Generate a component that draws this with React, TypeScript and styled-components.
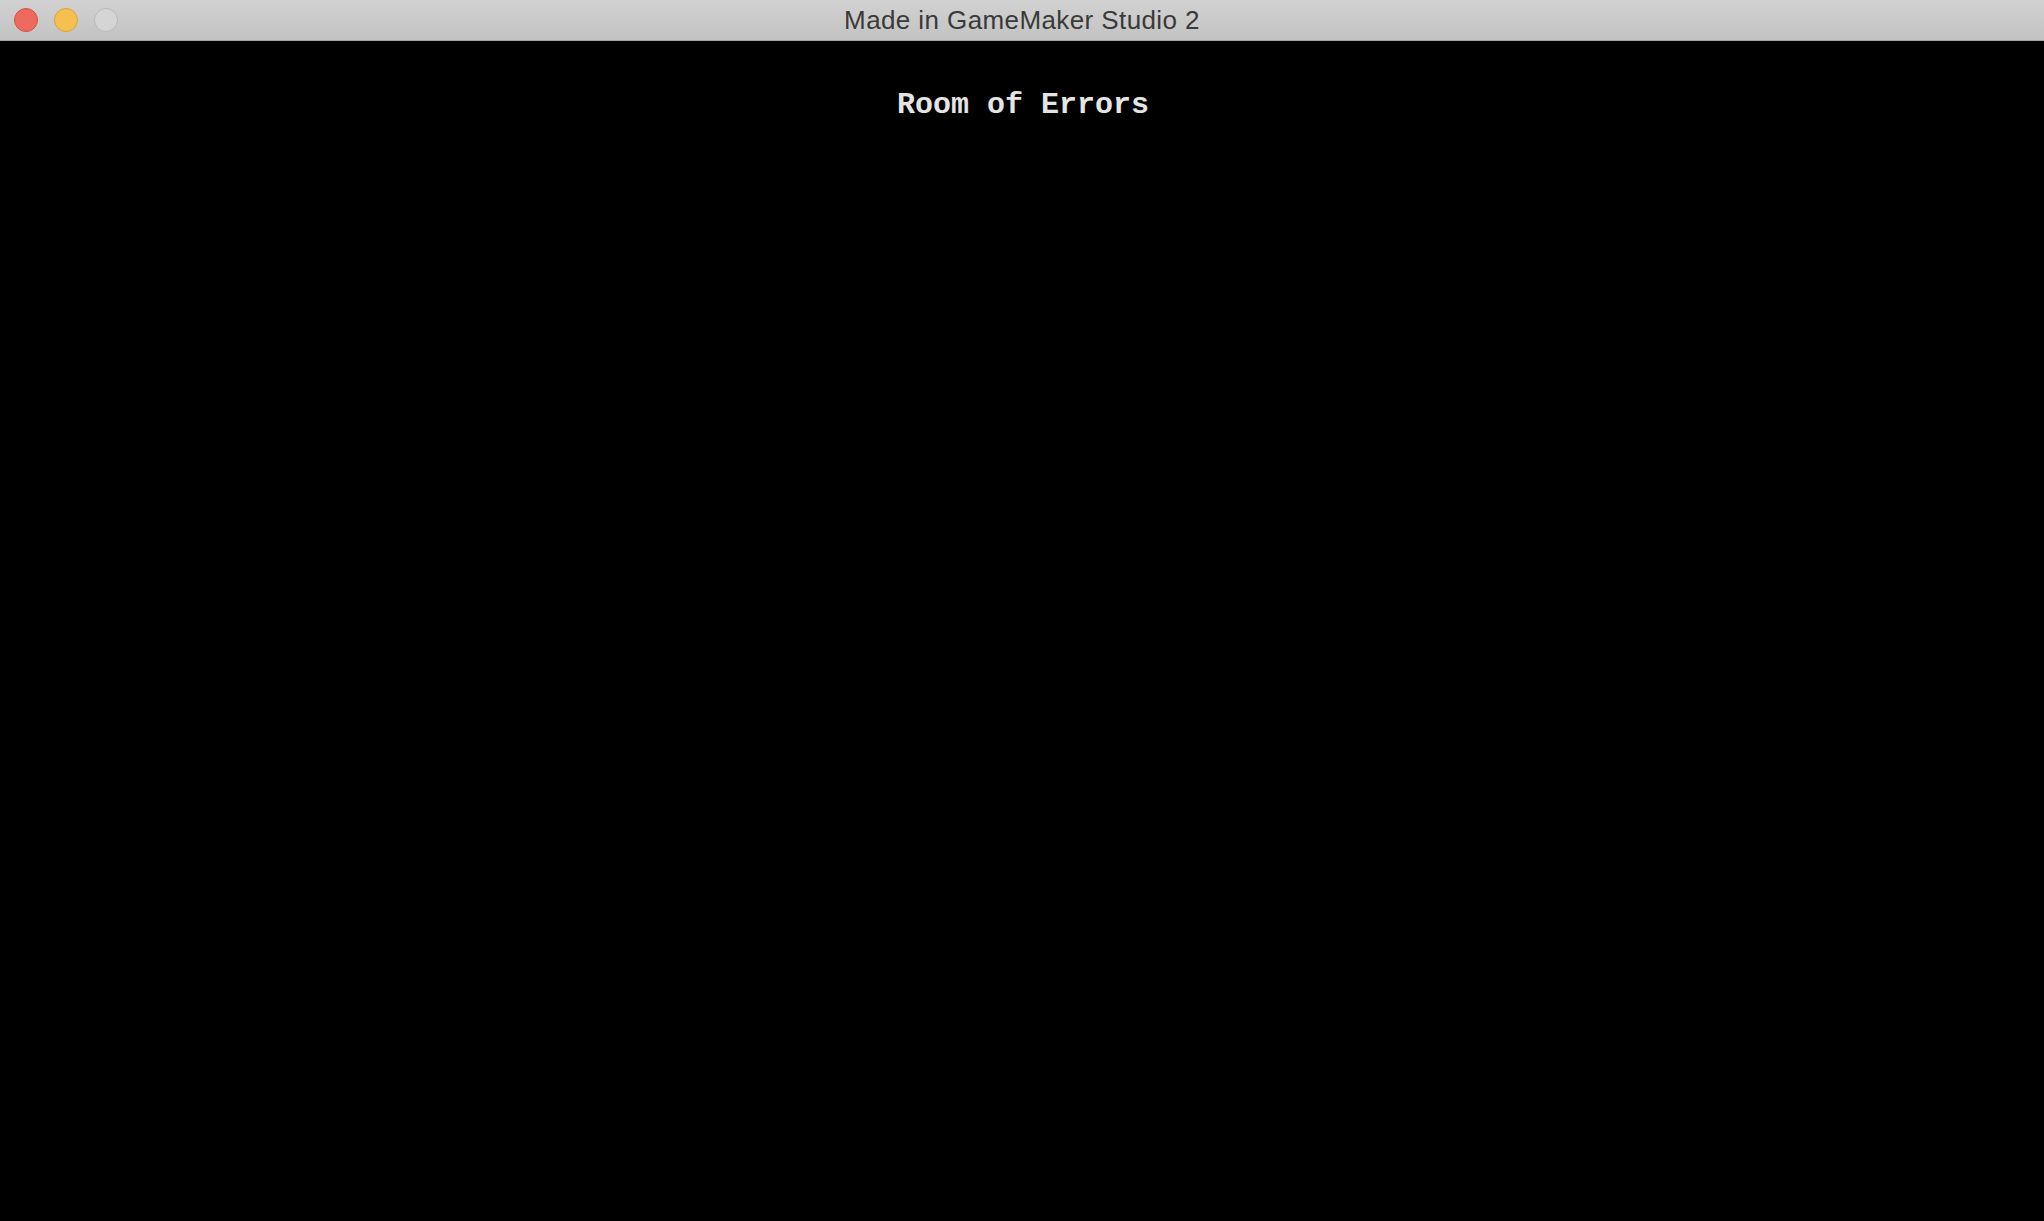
import React from "react";
import styled, { createGlobalStyle } from "styled-components";

const Global = createGlobalStyle`
  html, body { margin: 0; padding: 0; background: #000; }
  body { width: 2044px; height: 1221px; overflow: hidden; }
`;

const Window = styled.div`
  width: 2044px;
  height: 1221px;
  display: flex;
  flex-direction: column;
  background: #000;
`;

const TitleBar = styled.div`
  position: relative;
  height: 41px;
  flex: 0 0 41px;
  box-sizing: border-box;
  padding-top: 1px;
  background: linear-gradient(#d2d2d2, #c2c2c2);
  border-bottom: 1px solid #a4a4a4;
  display: flex;
  align-items: center;
  justify-content: center;
`;

const Lights = styled.div`
  position: absolute;
  left: 14px;
  top: 8px;
  display: flex;
  gap: 16px;
`;

const Light = styled.span<{ $bg: string; $border: string }>`
  width: 22px;
  height: 22px;
  border-radius: 50%;
  background: ${(p) => p.$bg};
  border: 1px solid ${(p) => p.$border};
`;

const Title = styled.div`
  font-family: "Liberation Sans", Arial, sans-serif;
  font-size: 26px;
  color: #3a3a3a;
  letter-spacing: 0.4px;
`;

const Game = styled.div`
  flex: 1;
  background: #000;
  display: flex;
  justify-content: center;
  padding-top: 46px;
`;

const RoomTitle = styled.div`
  font-family: "Liberation Mono", "DejaVu Sans Mono", monospace;
  font-weight: bold;
  font-size: 30px;
  line-height: 36px;
  color: #e4e4e4;
  height: 36px;
  margin-left: 2px;
`;

export default function App() {
  return (
    <>
      <Global />
      <Window>
        <TitleBar>
          <Lights>
            <Light $bg="#ee6a5f" $border="#d35247" />
            <Light $bg="#f5c04f" $border="#d9a53a" />
            <Light $bg="#d5d5d5" $border="#b9b9b9" />
          </Lights>
          <Title>Made in GameMaker Studio 2</Title>
        </TitleBar>
        <Game>
          <RoomTitle>Room of Errors</RoomTitle>
        </Game>
      </Window>
    </>
  );
}
